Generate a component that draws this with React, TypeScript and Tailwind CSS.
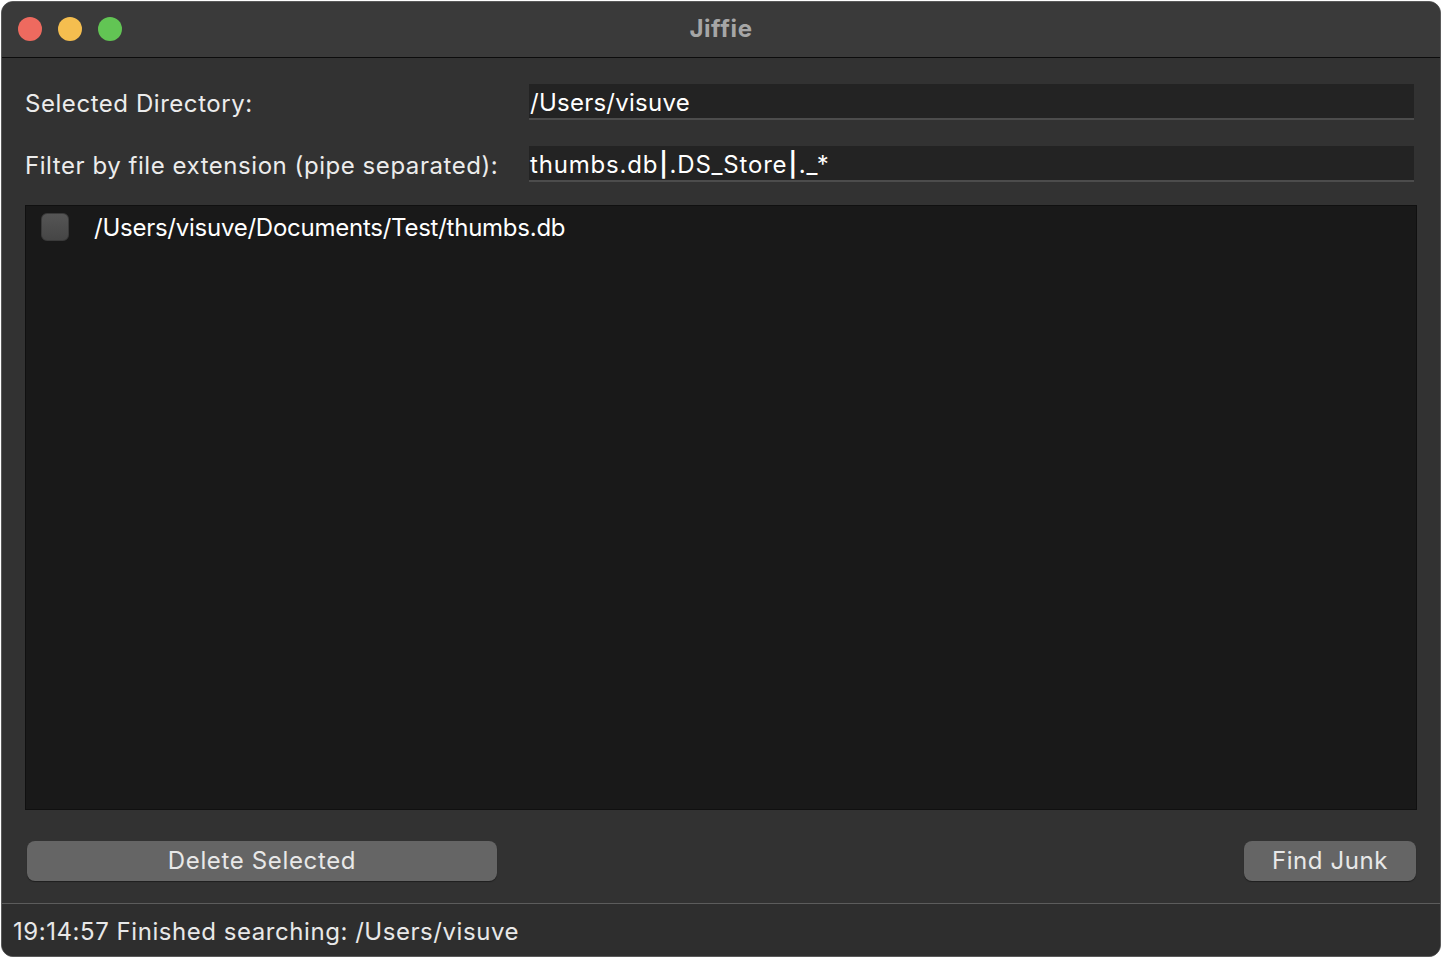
import React from "react";

export default function App() {
  return (
    <div className="w-[1442px] h-[958px] bg-white p-px" style={{ fontFamily: "Inter, 'Noto Sans', sans-serif" }}>
      <div className="w-full h-full rounded-[12px] border border-[#5a5a5a] bg-[#323232] overflow-hidden flex flex-col">
        {/* title bar */}
        <div className="relative h-[56px] shrink-0 bg-[#3a3a3a] border-b border-[#0c0c0c] flex items-center justify-center">
          <div className="absolute left-[16px] top-[15px] flex gap-[16px]">
            <span className="w-[24px] h-[24px] rounded-full bg-[#ee6a5f]" />
            <span className="w-[24px] h-[24px] rounded-full bg-[#f5be4f]" />
            <span className="w-[24px] h-[24px] rounded-full bg-[#62c554]" />
          </div>
          <span className="text-[24px] font-bold tracking-[0.6px] text-[#a6a6a6] -mt-[2px]">Jiffie</span>
        </div>

        {/* body */}
        <div className="flex-1 flex flex-col px-[23px] pt-[26px] pb-[21px]">
          <div className="flex items-center h-[36px]">
            <span className="w-[504px] text-[24px] tracking-[0.55px] text-[#ececec] pt-[3px]">Selected Directory:</span>
            <div className="flex-1 mr-[3px] h-[36px] bg-[#232323] border-b-2 border-[#4c4c4c] flex items-center pl-[1px] pt-[4px] text-[24px] tracking-[0.25px] text-white">
              /Users/visuve
            </div>
          </div>
          <div className="flex items-center h-[36px] mt-[26px]">
            <span className="w-[504px] text-[24px] tracking-[0.55px] text-[#ececec] pt-[3px]">Filter by file extension (pipe separated):</span>
            <div className="flex-1 mr-[3px] h-[36px] bg-[#232323] border-b-2 border-[#4c4c4c] flex items-center pl-[1px] pt-[4px] text-[24px] tracking-[0.8px] text-white">
              thumbs.db<span className="mx-[1px] font-semibold">|</span>.DS_Store<span className="mx-[1px] font-semibold">|</span>._*
            </div>
          </div>

          <div className="mt-[23px] h-[605px] bg-[#191919] border border-[#101010] pt-[7px] pl-[15px]">
            <div className="flex items-center gap-[25px] h-[28px]">
              <span className="w-[28px] h-[28px] rounded-[6px] bg-gradient-to-b from-[#555555] to-[#464646] border border-[#3a3a3a]" />
              <span className="text-[24px] tracking-[-0.25px] text-white pt-[2px]">/Users/visuve/Documents/Test/thumbs.db</span>
            </div>
          </div>

          <div className="flex justify-between mt-[31px] pl-[2px] pr-[1px]">
            <button className="w-[470px] h-[40px] rounded-[8px] bg-[#656565] text-[24px] tracking-[0.65px] text-[#e8e8e8] shadow-[0_1px_1px_rgba(0,0,0,0.4)]">
              Delete Selected
            </button>
            <button className="w-[172px] h-[40px] rounded-[8px] bg-[#656565] text-[24px] tracking-[0.6px] text-[#e8e8e8] shadow-[0_1px_1px_rgba(0,0,0,0.4)]">
              Find Junk
            </button>
          </div>
        </div>

        {/* status bar */}
        <div className="h-[53px] shrink-0 border-t border-[#5c5c5c] bg-[#2e2e2e] flex items-center pl-[11px] pt-[3px] text-[24px] tracking-[0.55px] text-[#e8e8e8]">
          19:14:57 Finished searching: /Users/visuve
        </div>
      </div>
    </div>
  );
}
